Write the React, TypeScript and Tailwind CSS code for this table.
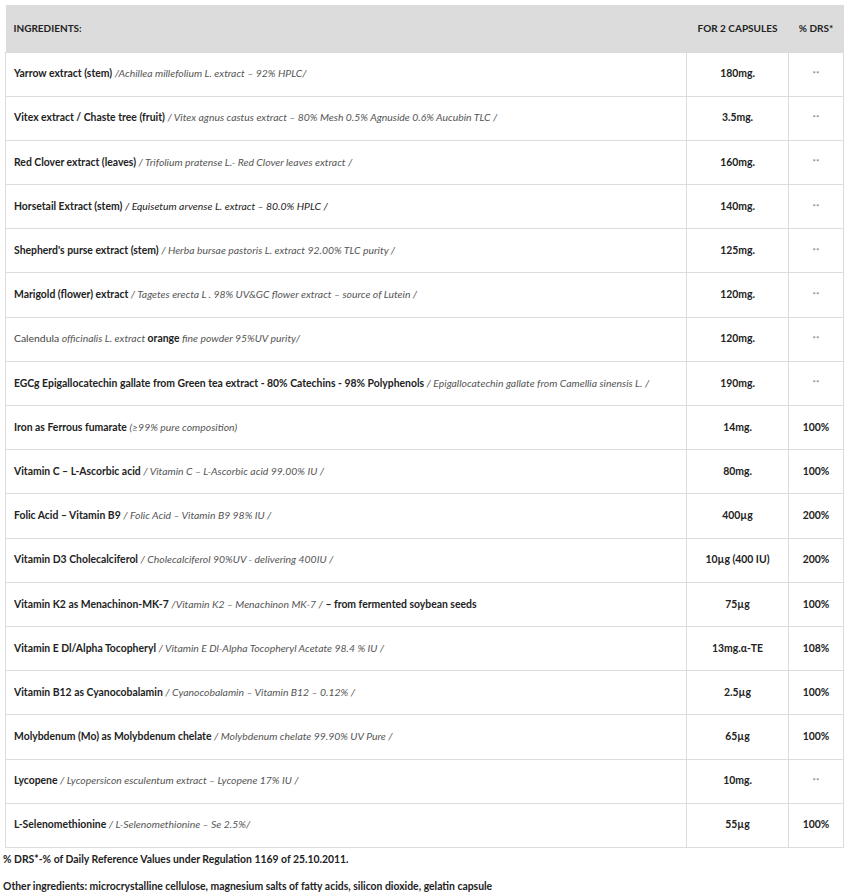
import React from "react";

type Part = { t: string; s?: "b" | "i" | "n" | "id" };

type Row = {
  name: Part[];
  dose: string;
  drs: string;
};

const rows: Row[] = [
  {
    name: [{ t: "Yarrow extract (stem) ", s: "b" }, { t: "/Achillea millefolium L. extract – 92% HPLC/", s: "i" }],
    dose: "180mg.",
    drs: "**",
  },
  {
    name: [
      { t: "Vitex extract / Chaste tree (fruit) ", s: "b" },
      { t: "/ Vitex agnus castus extract – 80% Mesh 0.5% Agnuside 0.6% Aucubin TLC /", s: "i" },
    ],
    dose: "3.5mg.",
    drs: "**",
  },
  {
    name: [
      { t: "Red Clover extract (leaves) ", s: "b" },
      { t: "/ Trifolium pratense L.- Red Clover leaves extract /", s: "i" },
    ],
    dose: "160mg.",
    drs: "**",
  },
  {
    name: [
      { t: "Horsetail Extract (stem)  ", s: "b" },
      { t: "/ Equisetum arvense L. extract – 80.0% HPLC /", s: "id" },
    ],
    dose: "140mg.",
    drs: "**",
  },
  {
    name: [
      { t: "Shepherd's purse extract (stem) ", s: "b" },
      { t: "/ Herba bursae pastoris L. extract 92.00% TLC purity /", s: "i" },
    ],
    dose: "125mg.",
    drs: "**",
  },
  {
    name: [
      { t: "Marigold (flower) extract ", s: "b" },
      { t: "/ Tagetes erecta L . 98% UV&GC flower extract – source of Lutein /", s: "i" },
    ],
    dose: "120mg.",
    drs: "**",
  },
  {
    name: [
      { t: "Calendula ", s: "n" },
      { t: "officinalis L. extract", s: "i" },
      { t: " orange ", s: "b" },
      { t: "fine powder 95%UV purity/", s: "i" },
    ],
    dose: "120mg.",
    drs: "**",
  },
  {
    name: [
      { t: "EGCg Epigallocatechin gallate from Green tea extract - 80% Catechins - 98% Polyphenols ", s: "b" },
      { t: "/ Epigallocatechin gallate from Camellia sinensis L. /", s: "i" },
    ],
    dose: "190mg.",
    drs: "**",
  },
  {
    name: [{ t: "Iron as Ferrous fumarate ", s: "b" }, { t: "(≥99% pure composition)", s: "i" }],
    dose: "14mg.",
    drs: "100%",
  },
  {
    name: [
      { t: "Vitamin C – L-Ascorbic acid ", s: "b" },
      { t: "/ Vitamin C – L-Ascorbic acid 99.00% IU /", s: "i" },
    ],
    dose: "80mg.",
    drs: "100%",
  },
  {
    name: [{ t: "Folic Acid – Vitamin B9 ", s: "b" }, { t: "/ Folic Acid – Vitamin B9 98% IU /", s: "i" }],
    dose: "400µg",
    drs: "200%",
  },
  {
    name: [
      { t: "Vitamin D3 Cholecalciferol ", s: "b" },
      { t: "/ Cholecalciferol 90%UV - delivering 400IU /", s: "i" },
    ],
    dose: "10µg (400 IU)",
    drs: "200%",
  },
  {
    name: [
      { t: "Vitamin K2 as Menachinon-MK-7 ", s: "b" },
      { t: "/Vitamin K2 – Menachinon MK-7 /", s: "i" },
      { t: " – from fermented soybean seeds", s: "b" },
    ],
    dose: "75µg",
    drs: "100%",
  },
  {
    name: [
      { t: "Vitamin E Dl/Alpha Tocopheryl ", s: "b" },
      { t: "/ Vitamin E Dl-Alpha Tocopheryl Acetate 98.4 % IU /", s: "i" },
    ],
    dose: "13mg.α-TE",
    drs: "108%",
  },
  {
    name: [
      { t: "Vitamin B12 as Cyanocobalamin ", s: "b" },
      { t: "/ Cyanocobalamin – Vitamin B12 – 0.12% /", s: "i" },
    ],
    dose: "2.5µg",
    drs: "100%",
  },
  {
    name: [
      { t: "Molybdenum (Mo) as Molybdenum chelate ", s: "b" },
      { t: "/ Molybdenum chelate 99.90% UV Pure /", s: "i" },
    ],
    dose: "65µg",
    drs: "100%",
  },
  {
    name: [
      { t: "Lycopene ", s: "b" },
      { t: "/ Lycopersicon esculentum extract – Lycopene 17% IU /", s: "i" },
    ],
    dose: "10mg.",
    drs: "**",
  },
  {
    name: [{ t: "L-Selenomethionine  ", s: "b" }, { t: "/ L-Selenomethionine – Se 2.5%/", s: "i" }],
    dose: "55µg",
    drs: "100%",
  },
];

function Piece({ p }: { p: Part }) {
  if (p.s === "b") return <span className="font-bold text-[#222]">{p.t}</span>;
  if (p.s === "i") return <span className="italic text-[#555]">{p.t}</span>;
  if (p.s === "id") return <span className="italic text-[#222]">{p.t}</span>;
  return <span className="text-[#444]">{p.t}</span>;
}

export default function App() {
  return (
    <div className="bg-white w-[848px] min-h-[895px] pt-[5px] pl-[3px] pr-[5px] font-['Lato',sans-serif] text-[10.4px] text-[#222]">
      <table className="ml-[2px] w-[838px] border-collapse table-fixed">
        <colgroup>
          <col className="w-[681px]" />
          <col className="w-[102px]" />
          <col className="w-[55px]" />
        </colgroup>
        <thead>
          <tr className="h-[47px] bg-[#dcdcdc] text-[10px] text-[#222]">
            <th className="text-left pl-2 font-bold">INGREDIENTS:</th>
            <th className="text-center font-bold">FOR 2 CAPSULES</th>
            <th className="text-center font-bold">% DRS*</th>
          </tr>
        </thead>
        <tbody>
          {rows.map((r, i) => (
            <tr key={i} className="h-[44.2px]">
              <td className="border border-[#dcdcdc] pl-2 align-middle whitespace-nowrap">
                {r.name.map((p, j) => (
                  <Piece key={j} p={p} />
                ))}
              </td>
              <td className="border border-[#dcdcdc] text-center font-bold">{r.dose}</td>
              <td
                className={
                  r.drs === "**"
                    ? "border border-[#dcdcdc] text-center text-[8px] text-[#777]"
                    : "border border-[#dcdcdc] text-center font-bold"
                }
              >
                {r.drs}
              </td>
            </tr>
          ))}
        </tbody>
      </table>
      <p className="font-bold mt-[4px]">% DRS*-% of Daily Reference Values under Regulation 1169 of 25.10.2011.</p>
      <p className="font-bold mt-[12px]">
        Other ingredients: microcrystalline cellulose, magnesium salts of fatty acids, silicon dioxide, gelatin capsule
      </p>
    </div>
  );
}
